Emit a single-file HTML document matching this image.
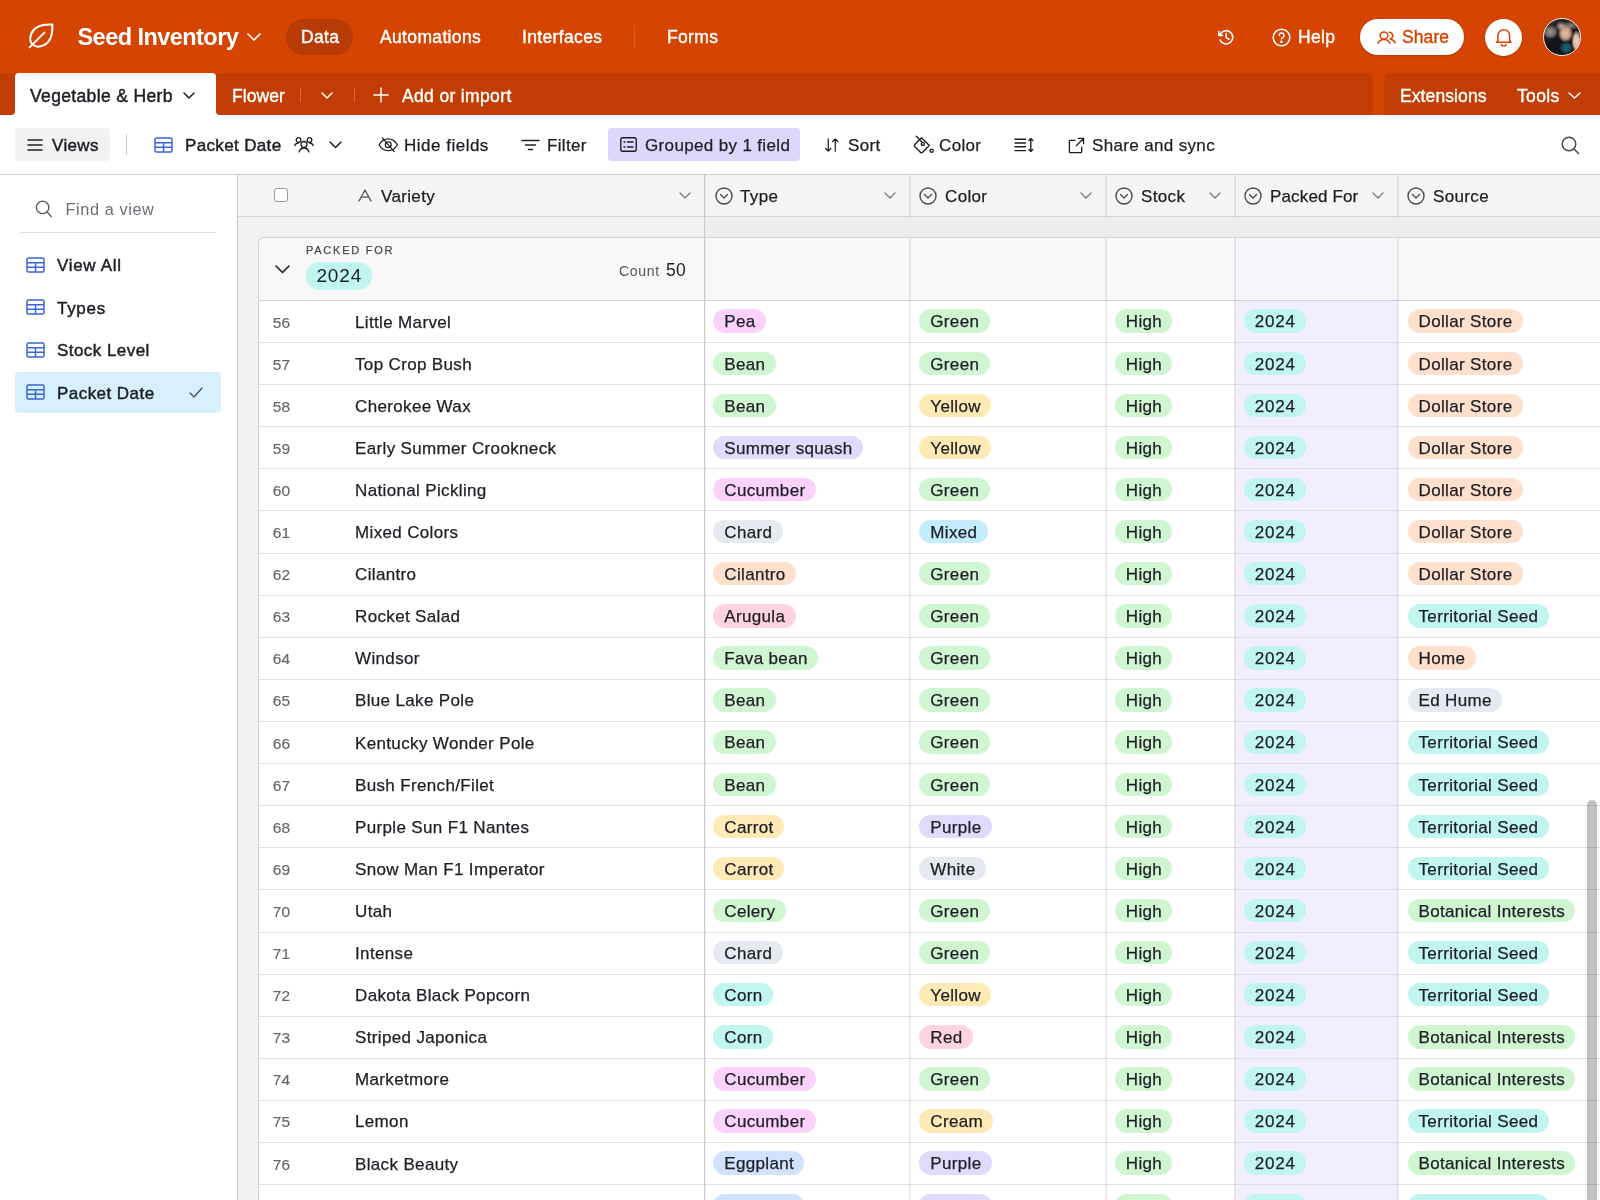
<!DOCTYPE html>
<html lang="en"><head><meta charset="utf-8"><title>Seed Inventory</title>
<style>
*{box-sizing:border-box;margin:0;padding:0}
html,body{width:1600px;height:1200px;overflow:hidden;background:#fff}
body{will-change:transform;font-family:"Liberation Sans",Arial,sans-serif;color:#1d1f25;position:relative;-webkit-font-smoothing:antialiased}
.abs{position:absolute}
svg{position:absolute;overflow:visible}
.t{position:absolute;white-space:nowrap;line-height:1;letter-spacing:.35px}
/* top bar */
#topbar{position:absolute;left:0;top:0;width:1600px;height:115px;background:#d64402}
#topbar .t{color:#fff}
#tabbarL0{position:absolute;left:0;top:73px;width:14.5px;height:42.2px;background:#c13d03;border-bottom-right-radius:4px;border-bottom:1px solid #b93a04}
#tabbarL{position:absolute;left:216px;top:73px;width:1157px;height:42.2px;background:#c13d03;border-top-right-radius:7px;border-bottom-left-radius:4px;border-bottom:1px solid #b93a04}
#tabbarR{position:absolute;left:1384px;top:73px;width:216px;height:42.2px;background:#c13d03;border-top-left-radius:7px;border-bottom:1px solid #b93a04}
#tabActive{position:absolute;left:14.5px;top:73px;width:201.5px;height:43px;background:#fff;border-radius:4px 4px 0 0}
.w{color:#fff}
/* toolbar */
#toolbar{position:absolute;left:0;top:115px;width:1600px;height:59px;background:#fff}
#tbline{position:absolute;left:0;top:174px;width:1600px;height:1px;background:#cdcdcd}
.tb{font-size:17px;color:#1d1f25;-webkit-text-stroke:.25px #1d1f25}
/* sidebar */
#sidebar{position:absolute;left:0;top:175px;width:237px;height:1025px;background:#fff}
#sideline{position:absolute;left:237px;top:175px;width:1px;height:1025px;background:#cbcbcb}
/* grid */
#grid{position:absolute;left:238px;top:175px;width:1362px;height:1025px;background:#f2f2f2}
#ghead{position:absolute;left:238px;top:175px;width:1362px;height:41px;background:#f5f5f5}
#gheadline{position:absolute;left:238px;top:216px;width:1362px;height:1px;background:#d4d4d4}
#strip{z-index:3;position:absolute;left:705px;top:217px;width:895px;height:20px;background:#ededed}
#stripline{z-index:3;position:absolute;left:705px;top:237px;width:895px;height:1px;background:#d4d4d4}
#group{position:absolute;left:258px;top:237px;width:1342px;height:64px;background:#f8f8f8;border:1px solid #d2d2d2;border-right:0;border-top-left-radius:6px}
#rowsleft{position:absolute;left:258px;top:300px;width:1px;height:900px;background:#d2d2d2}
.hd{font-size:17px;color:#1d1f25;-webkit-text-stroke:.25px #1d1f25}
.rows{position:absolute;left:0;top:0}
.row{position:absolute;left:259px;width:1341px;background:#fff;border-bottom:1px solid #e0e0e0;overflow:hidden}
.rc{position:absolute;left:0;width:100%;height:42px}
.row .num{-webkit-text-stroke:.15px #666;position:absolute;left:0;width:45px;top:0;height:42px;line-height:43.5px;text-align:center;font-size:15.5px;color:#666;letter-spacing:.2px}
.row .name{-webkit-text-stroke:.25px #1d1f25;position:absolute;left:96px;top:0;height:42px;line-height:43.5px;font-size:17px;letter-spacing:.35px;color:#1d1f25;white-space:nowrap}
.pill{-webkit-text-stroke:.25px #1d1f25;position:absolute;top:8.9px;height:23.4px;line-height:25.8px;padding:0 10.3px 0 11px;letter-spacing:.35px;border-radius:12px;font-size:17px;color:#1d1f25;white-space:nowrap}
.p-type{left:454.25px}
.p-color{left:660.25px}
.p-stock{left:855.75px}
.p-packed{left:984.75px;letter-spacing:.8px;padding-right:10.2px}
.p-source{left:1148.5px}
.pk{position:absolute;left:976px;top:0;width:163px;height:100%;background:#f1effd}
.green{background:#cff5d1}
.teal{background:#c1f5f0}
.yellow{background:#ffeab6}
.orange{background:#ffe0cc}
.red{background:#ffd4e0}
.pink{background:#fad2fc}
.purple{background:#e0dafd}
.blue{background:#d1e2ff}
.cyan{background:#c4ecff}
.gray{background:#e5e9f0}
.vline{position:absolute;top:175px;width:2px;height:1025px;background:rgba(0,0,0,.07)}

</style></head><body>
<div id="topbar">
  <svg style="left:28px;top:23.400px" width="26" height="26" viewBox="0 0 26 26" fill="none" stroke="#fff" stroke-width="2" stroke-linecap="round" stroke-linejoin="round"><path d="M24.300 1.600C14 1.200 6.200 3.800 3.400 10.500 1.600 15 2.400 19.300 4.600 21.400c2.400 2.300 6.900 3 11.300.800C22.300 19 24.900 11.200 24.300 1.600z"/><path d="M1.600 24.400L16.400 9.600"/></svg>
  <div class="t" style="left:77.500px;top:25.800px;font-size:23.500px;font-weight:700;letter-spacing:-0.55px">Seed Inventory</div>
  <svg style="left:247px;top:33px" width="14" height="8" viewBox="0 0 14 8" fill="none" stroke="#fff" stroke-width="1.6" stroke-linecap="round" stroke-linejoin="round"><path d="M1 1l6 6 6-6"/></svg>
  <div class="abs" style="left:286px;top:19px;width:67px;height:36px;border-radius:18px;background:#b83a05"></div>
  <div class="t" style="left:301px;top:29px;font-size:17.5px;-webkit-text-stroke:.4px #fff">Data</div>
  <div class="t" style="left:380px;top:29px;font-size:17.5px;-webkit-text-stroke:.4px #fff">Automations</div>
  <div class="t" style="left:522px;top:29px;font-size:17.5px;-webkit-text-stroke:.4px #fff">Interfaces</div>
  <div class="abs" style="left:634px;top:25px;width:1px;height:24px;background:#dd602a"></div>
  <div class="t" style="left:667px;top:29px;font-size:17.5px;-webkit-text-stroke:.4px #fff">Forms</div>
  <!-- history -->
  <svg style="left:1217px;top:28.5px" width="17.5" height="16.700" viewBox="0 0 21 20" fill="none" stroke="#fff" stroke-width="2" stroke-linecap="round" stroke-linejoin="round"><path d="M3.4 7.2A8 8 0 1 1 3.6 13.2"/><path d="M2.2 3.2v4.4h4.4"/><path d="M11 5.6v4.6l3.4 2"/></svg>
  <!-- help -->
  <svg style="left:1272px;top:28px" width="19" height="19" viewBox="0 0 19 19" fill="none" stroke="#fff" stroke-width="1.5" stroke-linecap="round" stroke-linejoin="round"><circle cx="9.5" cy="9.5" r="8.3"/><path d="M7.2 7.4a2.4 2.4 0 1 1 3.3 2.2c-.7.3-1 .8-1 1.5"/><circle cx="9.5" cy="13.8" r=".6" fill="#fff"/></svg>
  <div class="t" style="left:1298px;top:29px;font-size:17.5px;-webkit-text-stroke:.4px #fff">Help</div>
  <!-- share -->
  <div class="abs" style="left:1360px;top:19px;width:104px;height:36px;border-radius:18px;background:#fff;box-shadow:0 1px 2px rgba(0,0,0,.2)"></div>
  <svg style="left:1377px;top:29.5px" width="19.500" height="15" viewBox="0 0 21 18" preserveAspectRatio="none" fill="none" stroke="#d54402" stroke-width="1.6" stroke-linecap="round" stroke-linejoin="round"><circle cx="7.5" cy="6.6" r="4.2"/><path d="M1 16c1.2-3 3.6-4.6 6.5-4.600s5.300 1.600 6.500 4.600"/><path d="M12.800 2.600a4.200 4.200 0 0 1 1.200 8.200c2.300.3 4.300 1.900 5.600 4.700"/></svg>
  <div class="t" style="left:1402px;top:29px;font-size:17.5px;color:#d54402;letter-spacing:.1px;-webkit-text-stroke:.4px #d54402">Share</div>
  <!-- bell -->
  <div class="abs" style="left:1485px;top:19px;width:37px;height:37px;border-radius:50%;background:#fff;box-shadow:0 1px 2px rgba(0,0,0,.2)"></div>
  <svg style="left:1494.300px;top:26.800px" width="19.500" height="19.500" viewBox="0 0 20 21" preserveAspectRatio="none" fill="none" stroke="#d54402" stroke-width="1.6" stroke-linecap="round" stroke-linejoin="round"><path d="M4 14.500V9a6 6 0 0 1 12 0v5.500l1.400 2H2.600z"/><path d="M7.600 18.800a2.500 2.500 0 0 0 4.800 0"/></svg>
  <!-- avatar -->
  <div class="abs" style="left:1543px;top:18px;width:37.5px;height:37.5px;border-radius:50%;border:1.500px solid #fdeee6;overflow:hidden;background:
    radial-gradient(ellipse 22% 26% at 60% 40%,#e3c2a8 0,#c9a185 55%,rgba(160,120,95,0) 100%),
    radial-gradient(ellipse 16% 14% at 47% 20%,#c9b79c 0,rgba(150,130,110,0) 100%),
    radial-gradient(ellipse 20% 18% at 62% 80%,#1f6674 0,#174a55 60%,rgba(20,50,60,0) 100%),
    radial-gradient(ellipse 14% 32% at 90% 62%,#ecd2c2 0,#dcb9a6 55%,rgba(200,160,140,0) 100%),
    radial-gradient(ellipse 10% 12% at 93% 45%,#1d3a2a 0,rgba(30,60,40,0) 100%),
    radial-gradient(ellipse 22% 20% at 18% 36%,#a39b95 0,#6d6663 60%,rgba(80,70,70,0) 100%),
    radial-gradient(ellipse 30% 14% at 75% 18%,#8f8378 0,rgba(120,110,100,0) 100%),
    linear-gradient(135deg,#3a3436 0,#15141b 45%,#10151a 100%)"></div>
</div>
<div class="abs" style="left:8px;top:100px;width:216px;height:16px;background:#fff"></div><div id="tabbarL0"></div><div id="tabbarL"></div><div id="tabbarR"></div>
<div id="tabActive"></div>
<div class="t" style="left:30px;top:88px;font-size:17.5px;color:#1d1f25;-webkit-text-stroke:.45px #1d1f25">Vegetable &amp; Herb</div>
<svg style="left:183px;top:92px" width="12" height="7" viewBox="0 0 12 7" fill="none" stroke="#1d1f25" stroke-width="1.5" stroke-linecap="round" stroke-linejoin="round"><path d="M1 1l5 5 5-5"/></svg>
<div class="t w" style="left:232px;top:88px;font-size:17.5px;letter-spacing:.05px;-webkit-text-stroke:.4px #fff">Flower</div>
<div class="abs" style="left:300px;top:88px;width:1px;height:14px;background:#d2693d"></div>
<svg style="left:321px;top:92px" width="12" height="7" viewBox="0 0 12 7" fill="none" stroke="#fff" stroke-width="1.500" stroke-linecap="round" stroke-linejoin="round"><path d="M1 1l5 5 5-5"/></svg>
<div class="abs" style="left:354px;top:88px;width:1px;height:14px;background:#d2693d"></div>
<svg style="left:373px;top:87px" width="16" height="16" viewBox="0 0 16 16" fill="none" stroke="#fff" stroke-width="1.500" stroke-linecap="round"><path d="M8 1v14M1 8h14"/></svg>
<div class="t w" style="left:402px;top:88px;font-size:17.5px;-webkit-text-stroke:.4px #fff">Add or import</div>
<div class="t w" style="left:1400px;top:88px;font-size:17.5px;letter-spacing:.1px;-webkit-text-stroke:.4px #fff">Extensions</div>
<div class="t w" style="left:1517px;top:88px;font-size:17.5px;-webkit-text-stroke:.4px #fff">Tools</div>
<svg style="left:1568px;top:92px" width="13" height="7" viewBox="0 0 13 7" fill="none" stroke="#fff" stroke-width="1.500" stroke-linecap="round" stroke-linejoin="round"><path d="M1 1l5.500 5L12 1"/></svg>

<div id="toolbar"></div><div id="tbline"></div>
<!-- Views btn -->
<div class="abs" style="left:15px;top:128px;width:95px;height:33px;border-radius:4px;background:#f2f2f2"></div>
<svg style="left:27px;top:138px" width="16" height="14" viewBox="0 0 16 14" fill="none" stroke="#1d1f25" stroke-width="1.500" stroke-linecap="round"><path d="M1 2h14M1 7h14M1 12h14"/></svg>
<div class="t tb" style="left:52px;top:137px;-webkit-text-stroke:.45px #1d1f25">Views</div>
<div class="abs" style="left:126px;top:134px;width:1px;height:21px;background:#c9c9c9"></div>
<svg style="left:154px;top:137px" width="19" height="16" viewBox="0 0 19 16" fill="none" stroke="#3b66d6" stroke-width="1.500" stroke-linejoin="round"><rect x="1" y="1" width="17" height="14" rx="1.500"/><path d="M1 5.700h17M1 10.300h17M9.500 5.700V15"/></svg>
<div class="t tb" style="left:185px;top:137px;-webkit-text-stroke:.45px #1d1f25">Packet Date</div>
<svg style="left:294px;top:136px" width="20" height="17" viewBox="0 0 20 17" fill="none" stroke="#1d1f25" stroke-width="1.300" stroke-linecap="round" stroke-linejoin="round"><circle cx="10" cy="8.500" r="3"/><path d="M5 16c.8-2.600 2.700-4 5-4s4.200 1.400 5 4"/><circle cx="4.500" cy="4" r="2.300"/><path d="M.8 9.600C1.500 7.800 2.800 7 4.500 7"/><circle cx="15.500" cy="4" r="2.300"/><path d="M19.200 9.600C18.500 7.800 17.200 7 15.500 7"/></svg>
<svg style="left:329px;top:141px" width="13" height="8" viewBox="0 0 13 8" fill="none" stroke="#1d1f25" stroke-width="1.500" stroke-linecap="round" stroke-linejoin="round"><path d="M1 1l5.500 5.500L12 1"/></svg>
<!-- hide fields -->
<svg style="left:378px;top:137px" width="20.500" height="15.500" viewBox="0 0 22 17" fill="none" stroke="#1d1f25" stroke-width="1.400" stroke-linecap="round" stroke-linejoin="round"><path d="M1 8.500C3.500 4 7 2 11 2s7.500 2 10 6.500C18.500 13 15 15 11 15S3.500 13 1 8.500z"/><circle cx="11" cy="8.500" r="3.200"/><path d="M4.500 1l13 15"/></svg>
<div class="t tb" style="left:404px;top:137px;letter-spacing:.5px">Hide fields</div>
<svg style="left:521px;top:139px" width="19" height="12" viewBox="0 0 19 12" fill="none" stroke="#1d1f25" stroke-width="1.500" stroke-linecap="round"><path d="M1 1.500h17M4.500 6h10M7.500 10.500h4"/></svg>
<div class="t tb" style="left:547px;top:137px">Filter</div>
<div class="abs" style="left:608px;top:128px;width:192px;height:33px;border-radius:4px;background:#ddd7fb"></div>
<svg style="left:620px;top:137px" width="17" height="15" viewBox="0 0 17 15" fill="none" stroke="#1d1f25" stroke-width="1.400" stroke-linecap="round" stroke-linejoin="round"><rect x=".8" y=".8" width="15.400" height="13.400" rx="1.500"/><path d="M4 5h1M7.500 5h5.500M4 10h1M7.500 10h5.500"/></svg>
<div class="t tb" style="left:645px;top:137px">Grouped by 1 field</div>
<svg style="left:823.5px;top:138.200px" width="15.500" height="14" viewBox="0 0 17 16" fill="none" stroke="#1d1f25" stroke-width="1.400" stroke-linecap="round" stroke-linejoin="round"><path d="M4.500 1v14M1.500 12l3 3 3-3M12.500 15V1M9.500 4l3-3 3 3"/></svg>
<div class="t tb" style="left:848px;top:137px">Sort</div>
<svg style="left:912px;top:135px" width="22" height="19" viewBox="0 0 22 19" fill="none" stroke="#1d1f25" stroke-width="1.400" stroke-linecap="round" stroke-linejoin="round"><path d="M9.500 2.700l7.800 7.800-6.700 6.700a1.600 1.600 0 0 1-2.200 0L2.800 11.600a1.600 1.600 0 0 1 0-2.200z"/><path d="M4.300 1.300l5.600 5.600"/><circle cx="10.800" cy="8.900" r="1.500"/><circle cx="19.600" cy="15.700" r="1.600"/></svg>
<div class="t tb" style="left:939px;top:137px">Color</div>
<svg style="left:1014px;top:137px" width="20" height="16" viewBox="0 0 20 16" fill="none" stroke="#1d1f25" stroke-width="1.400" stroke-linecap="round" stroke-linejoin="round"><path d="M1 2.200h10.500M1 6h10.500M1 9.800h10.500M1 13.600h10.500M16.800 1.500v13M14.900 3.400l1.900-1.900 1.900 1.900M14.900 12.600l1.900 1.900 1.900-1.900"/></svg>
<svg style="left:1067.5px;top:136.500px" width="17" height="17" viewBox="0 0 18 18" fill="none" stroke="#1d1f25" stroke-width="1.400" stroke-linecap="round" stroke-linejoin="round"><path d="M7.500 3.500H2.500a1 1 0 0 0-1 1v11a1 1 0 0 0 1 1h11a1 1 0 0 0 1-1v-5"/><path d="M11 1.500h5.500V7M16.500 1.500L9 9"/></svg>
<div class="t tb" style="left:1092px;top:137px">Share and sync</div>
<svg style="left:1561px;top:136px" width="19" height="19" viewBox="0 0 19 19" fill="none" stroke="#444" stroke-width="1.400" stroke-linecap="round"><circle cx="8" cy="8" r="6.800"/><path d="M13 13l4.500 4.500"/></svg>

<div id="sidebar"></div><div id="sideline"></div>
<svg style="left:34.500px;top:199.500px" width="17.500" height="18" viewBox="0 0 18 19" fill="none" stroke="#555" stroke-width="1.400" stroke-linecap="round"><circle cx="7.800" cy="7.800" r="6.600"/><path d="M12.700 12.700l4.300 4.800"/></svg>
<div class="t" style="left:65.5px;top:201.4px;font-size:16.3px;letter-spacing:.6px;color:#6b6e76">Find a view</div>
<div class="abs" style="left:20px;top:232px;width:196px;height:1px;background:#dedede"></div>
<div class="abs" style="left:15px;top:372px;width:206px;height:41px;border-radius:4px;background:#d6f0fd"></div>
<svg style="left:26px;top:257px" width="19" height="16" viewBox="0 0 19 16" fill="none" stroke="#3b66d6" stroke-width="1.500" stroke-linejoin="round"><rect x="1" y="1" width="17" height="14" rx="1.500"/><path d="M1 5.700h17M1 10.300h17M9.500 5.700V15"/></svg>
<svg style="left:26px;top:299px" width="19" height="16" viewBox="0 0 19 16" fill="none" stroke="#3b66d6" stroke-width="1.500" stroke-linejoin="round"><rect x="1" y="1" width="17" height="14" rx="1.500"/><path d="M1 5.700h17M1 10.300h17M9.500 5.700V15"/></svg>
<svg style="left:26px;top:342px" width="19" height="16" viewBox="0 0 19 16" fill="none" stroke="#3b66d6" stroke-width="1.500" stroke-linejoin="round"><rect x="1" y="1" width="17" height="14" rx="1.500"/><path d="M1 5.700h17M1 10.300h17M9.500 5.700V15"/></svg>
<svg style="left:26px;top:384px" width="19" height="16" viewBox="0 0 19 16" fill="none" stroke="#3b66d6" stroke-width="1.500" stroke-linejoin="round"><rect x="1" y="1" width="17" height="14" rx="1.500"/><path d="M1 5.700h17M1 10.300h17M9.500 5.700V15"/></svg>
<div class="t tb" style="left:57px;top:256.5px;letter-spacing:.7px;-webkit-text-stroke:.45px #1d1f25">View All</div>
<div class="t tb" style="left:57px;top:299.5px;letter-spacing:.7px;-webkit-text-stroke:.45px #1d1f25">Types</div>
<div class="t tb" style="left:57px;top:341.5px;letter-spacing:.45px;-webkit-text-stroke:.45px #1d1f25">Stock Level</div>
<div class="t tb" style="left:57px;top:384.5px;letter-spacing:.45px;-webkit-text-stroke:.45px #1d1f25">Packet Date</div>
<svg style="left:189px;top:387px" width="14" height="11" viewBox="0 0 14 11" fill="none" stroke="#555" stroke-width="1.400" stroke-linecap="round" stroke-linejoin="round"><path d="M1 6l4 4 8-9"/></svg>

<div id="grid"></div>
<div id="ghead"></div><div id="gheadline"></div>
<div id="strip"></div><div id="stripline"></div>
<!-- header cells -->
<div class="abs" style="left:274px;top:188px;width:14px;height:14px;border:1.500px solid #9a9a9a;border-radius:3px;background:#fff"></div>
<svg style="left:358px;top:189px" width="14" height="13" viewBox="0 0 14 13" fill="none" stroke="#555" stroke-width="1.300" stroke-linecap="round" stroke-linejoin="round"><path d="M1 12L7 1l6 11M3.200 8.200h7.600"/></svg>
<div class="t hd" style="left:381px;top:188px">Variety</div>
<svg style="left:679px;top:192px" width="12" height="7" viewBox="0 0 12 7" fill="none" stroke="#777" stroke-width="1.300" stroke-linecap="round" stroke-linejoin="round"><path d="M1 1l5 5 5-5"/></svg>

<svg class="ci" style="left:714.7px;top:187px" width="18" height="18" viewBox="0 0 18 18" fill="none" stroke="#4c4c4c" stroke-width="1.400" stroke-linecap="round" stroke-linejoin="round"><circle cx="9" cy="9" r="8"/><path d="M5.500 7.500L9 11l3.500-3.500"/></svg>
<div class="t hd" style="left:740px;top:188px">Type</div>
<svg style="left:884px;top:192px" width="12" height="7" viewBox="0 0 12 7" fill="none" stroke="#777" stroke-width="1.300" stroke-linecap="round" stroke-linejoin="round"><path d="M1 1l5 5 5-5"/></svg>

<svg class="ci" style="left:918.7px;top:187px" width="18" height="18" viewBox="0 0 18 18" fill="none" stroke="#4c4c4c" stroke-width="1.400" stroke-linecap="round" stroke-linejoin="round"><circle cx="9" cy="9" r="8"/><path d="M5.500 7.500L9 11l3.500-3.500"/></svg>
<div class="t hd" style="left:945px;top:188px">Color</div>
<svg style="left:1080px;top:192px" width="12" height="7" viewBox="0 0 12 7" fill="none" stroke="#777" stroke-width="1.300" stroke-linecap="round" stroke-linejoin="round"><path d="M1 1l5 5 5-5"/></svg>

<svg class="ci" style="left:1114.7px;top:187px" width="18" height="18" viewBox="0 0 18 18" fill="none" stroke="#4c4c4c" stroke-width="1.400" stroke-linecap="round" stroke-linejoin="round"><circle cx="9" cy="9" r="8"/><path d="M5.500 7.500L9 11l3.500-3.500"/></svg>
<div class="t hd" style="left:1141px;top:188px">Stock</div>
<svg style="left:1209px;top:192px" width="12" height="7" viewBox="0 0 12 7" fill="none" stroke="#777" stroke-width="1.300" stroke-linecap="round" stroke-linejoin="round"><path d="M1 1l5 5 5-5"/></svg>

<svg class="ci" style="left:1243.7px;top:187px" width="18" height="18" viewBox="0 0 18 18" fill="none" stroke="#4c4c4c" stroke-width="1.400" stroke-linecap="round" stroke-linejoin="round"><circle cx="9" cy="9" r="8"/><path d="M5.500 7.500L9 11l3.500-3.500"/></svg>
<div class="t hd" style="left:1270px;top:188px;letter-spacing:.15px">Packed For</div>
<svg style="left:1372px;top:192px" width="12" height="7" viewBox="0 0 12 7" fill="none" stroke="#777" stroke-width="1.300" stroke-linecap="round" stroke-linejoin="round"><path d="M1 1l5 5 5-5"/></svg>

<svg class="ci" style="left:1406.7px;top:187px" width="18" height="18" viewBox="0 0 18 18" fill="none" stroke="#4c4c4c" stroke-width="1.400" stroke-linecap="round" stroke-linejoin="round"><circle cx="9" cy="9" r="8"/><path d="M5.500 7.500L9 11l3.500-3.500"/></svg>
<div class="t hd" style="left:1433px;top:188px">Source</div>

<!-- group header -->
<div id="group"></div>
<div class="abs" style="left:1235px;top:238px;width:163px;height:62px;background:#f6f5fb"></div>
<svg style="left:275px;top:265px" width="15" height="9" viewBox="0 0 15 9" fill="none" stroke="#1d1f25" stroke-width="1.600" stroke-linecap="round" stroke-linejoin="round"><path d="M1 1l6.500 6.500L14 1"/></svg>
<div class="t" style="left:306px;top:245.2px;font-size:11px;letter-spacing:1.75px;color:#4a4a4a;-webkit-text-stroke:.25px #4a4a4a">PACKED FOR</div>
<div class="abs" style="left:305.5px;top:261.5px;width:66.5px;height:28.5px;border-radius:14.25px;background:#c1f5f0"></div>
<div class="t" style="left:316.4px;top:266px;font-size:19px;letter-spacing:.9px;color:#1d1f25">2024</div>
<div class="t" style="left:619px;top:264px;font-size:14px;letter-spacing:.7px;color:#555">Count</div>
<div class="t" style="left:666px;top:262px;font-size:17.5px;color:#1d1f25">50</div>
<div class="rows">
<div class="row" style="top:301px;height:42px"><i class="pk"></i><div class="rc" style="top:-0.45px"><span class="num">56</span><span class="name">Little Marvel</span><span class="pill p-type pink">Pea</span><span class="pill p-color green">Green</span><span class="pill p-stock green">High</span><span class="pill p-packed teal">2024</span><span class="pill p-source orange">Dollar Store</span></div></div>
<div class="row" style="top:343px;height:42px"><i class="pk"></i><div class="rc" style="top:-0.35px"><span class="num">57</span><span class="name">Top Crop Bush</span><span class="pill p-type green">Bean</span><span class="pill p-color green">Green</span><span class="pill p-stock green">High</span><span class="pill p-packed teal">2024</span><span class="pill p-source orange">Dollar Store</span></div></div>
<div class="row" style="top:385px;height:42px"><i class="pk"></i><div class="rc" style="top:-0.25px"><span class="num">58</span><span class="name">Cherokee Wax</span><span class="pill p-type green">Bean</span><span class="pill p-color yellow">Yellow</span><span class="pill p-stock green">High</span><span class="pill p-packed teal">2024</span><span class="pill p-source orange">Dollar Store</span></div></div>
<div class="row" style="top:427px;height:42px"><i class="pk"></i><div class="rc" style="top:-0.15px"><span class="num">59</span><span class="name">Early Summer Crookneck</span><span class="pill p-type purple">Summer squash</span><span class="pill p-color yellow">Yellow</span><span class="pill p-stock green">High</span><span class="pill p-packed teal">2024</span><span class="pill p-source orange">Dollar Store</span></div></div>
<div class="row" style="top:469px;height:42px"><i class="pk"></i><div class="rc" style="top:-0.05px"><span class="num">60</span><span class="name">National Pickling</span><span class="pill p-type pink">Cucumber</span><span class="pill p-color green">Green</span><span class="pill p-stock green">High</span><span class="pill p-packed teal">2024</span><span class="pill p-source orange">Dollar Store</span></div></div>
<div class="row" style="top:511px;height:43px"><i class="pk"></i><div class="rc" style="top:0.05px"><span class="num">61</span><span class="name">Mixed Colors</span><span class="pill p-type gray">Chard</span><span class="pill p-color cyan">Mixed</span><span class="pill p-stock green">High</span><span class="pill p-packed teal">2024</span><span class="pill p-source orange">Dollar Store</span></div></div>
<div class="row" style="top:554px;height:42px"><i class="pk"></i><div class="rc" style="top:-0.85px"><span class="num">62</span><span class="name">Cilantro</span><span class="pill p-type orange">Cilantro</span><span class="pill p-color green">Green</span><span class="pill p-stock green">High</span><span class="pill p-packed teal">2024</span><span class="pill p-source orange">Dollar Store</span></div></div>
<div class="row" style="top:596px;height:42px"><i class="pk"></i><div class="rc" style="top:-0.75px"><span class="num">63</span><span class="name">Rocket Salad</span><span class="pill p-type red">Arugula</span><span class="pill p-color green">Green</span><span class="pill p-stock green">High</span><span class="pill p-packed teal">2024</span><span class="pill p-source teal">Territorial Seed</span></div></div>
<div class="row" style="top:638px;height:42px"><i class="pk"></i><div class="rc" style="top:-0.65px"><span class="num">64</span><span class="name">Windsor</span><span class="pill p-type green">Fava bean</span><span class="pill p-color green">Green</span><span class="pill p-stock green">High</span><span class="pill p-packed teal">2024</span><span class="pill p-source orange">Home</span></div></div>
<div class="row" style="top:680px;height:42px"><i class="pk"></i><div class="rc" style="top:-0.55px"><span class="num">65</span><span class="name">Blue Lake Pole</span><span class="pill p-type green">Bean</span><span class="pill p-color green">Green</span><span class="pill p-stock green">High</span><span class="pill p-packed teal">2024</span><span class="pill p-source gray">Ed Hume</span></div></div>
<div class="row" style="top:722px;height:42px"><i class="pk"></i><div class="rc" style="top:-0.45px"><span class="num">66</span><span class="name">Kentucky Wonder Pole</span><span class="pill p-type green">Bean</span><span class="pill p-color green">Green</span><span class="pill p-stock green">High</span><span class="pill p-packed teal">2024</span><span class="pill p-source teal">Territorial Seed</span></div></div>
<div class="row" style="top:764px;height:42px"><i class="pk"></i><div class="rc" style="top:-0.35px"><span class="num">67</span><span class="name">Bush French/Filet</span><span class="pill p-type green">Bean</span><span class="pill p-color green">Green</span><span class="pill p-stock green">High</span><span class="pill p-packed teal">2024</span><span class="pill p-source teal">Territorial Seed</span></div></div>
<div class="row" style="top:806px;height:42px"><i class="pk"></i><div class="rc" style="top:-0.25px"><span class="num">68</span><span class="name">Purple Sun F1 Nantes</span><span class="pill p-type yellow">Carrot</span><span class="pill p-color purple">Purple</span><span class="pill p-stock green">High</span><span class="pill p-packed teal">2024</span><span class="pill p-source teal">Territorial Seed</span></div></div>
<div class="row" style="top:848px;height:42px"><i class="pk"></i><div class="rc" style="top:-0.15px"><span class="num">69</span><span class="name">Snow Man F1 Imperator</span><span class="pill p-type yellow">Carrot</span><span class="pill p-color gray">White</span><span class="pill p-stock green">High</span><span class="pill p-packed teal">2024</span><span class="pill p-source teal">Territorial Seed</span></div></div>
<div class="row" style="top:890px;height:43px"><i class="pk"></i><div class="rc" style="top:-0.05px"><span class="num">70</span><span class="name">Utah</span><span class="pill p-type green">Celery</span><span class="pill p-color green">Green</span><span class="pill p-stock green">High</span><span class="pill p-packed teal">2024</span><span class="pill p-source green">Botanical Interests</span></div></div>
<div class="row" style="top:933px;height:42px"><i class="pk"></i><div class="rc" style="top:-0.95px"><span class="num">71</span><span class="name">Intense</span><span class="pill p-type gray">Chard</span><span class="pill p-color green">Green</span><span class="pill p-stock green">High</span><span class="pill p-packed teal">2024</span><span class="pill p-source teal">Territorial Seed</span></div></div>
<div class="row" style="top:975px;height:42px"><i class="pk"></i><div class="rc" style="top:-0.85px"><span class="num">72</span><span class="name">Dakota Black Popcorn</span><span class="pill p-type teal">Corn</span><span class="pill p-color yellow">Yellow</span><span class="pill p-stock green">High</span><span class="pill p-packed teal">2024</span><span class="pill p-source teal">Territorial Seed</span></div></div>
<div class="row" style="top:1017px;height:42px"><i class="pk"></i><div class="rc" style="top:-0.75px"><span class="num">73</span><span class="name">Striped Japonica</span><span class="pill p-type teal">Corn</span><span class="pill p-color red">Red</span><span class="pill p-stock green">High</span><span class="pill p-packed teal">2024</span><span class="pill p-source green">Botanical Interests</span></div></div>
<div class="row" style="top:1059px;height:42px"><i class="pk"></i><div class="rc" style="top:-0.65px"><span class="num">74</span><span class="name">Marketmore</span><span class="pill p-type pink">Cucumber</span><span class="pill p-color green">Green</span><span class="pill p-stock green">High</span><span class="pill p-packed teal">2024</span><span class="pill p-source green">Botanical Interests</span></div></div>
<div class="row" style="top:1101px;height:42px"><i class="pk"></i><div class="rc" style="top:-0.55px"><span class="num">75</span><span class="name">Lemon</span><span class="pill p-type pink">Cucumber</span><span class="pill p-color yellow">Cream</span><span class="pill p-stock green">High</span><span class="pill p-packed teal">2024</span><span class="pill p-source teal">Territorial Seed</span></div></div>
<div class="row" style="top:1143px;height:42px"><i class="pk"></i><div class="rc" style="top:-0.45px"><span class="num">76</span><span class="name">Black Beauty</span><span class="pill p-type blue">Eggplant</span><span class="pill p-color purple">Purple</span><span class="pill p-stock green">High</span><span class="pill p-packed teal">2024</span><span class="pill p-source green">Botanical Interests</span></div></div>
<div class="row" style="top:1185px;height:42px"><i class="pk"></i><div class="rc" style="top:-0.35px"><span class="num">77</span><span class="name">Ping Tung Long</span><span class="pill p-type blue">Eggplant</span><span class="pill p-color purple">Purple</span><span class="pill p-stock green">High</span><span class="pill p-packed teal">2024</span><span class="pill p-source teal">Territorial Seed</span></div></div>
</div>
<div id="rowsleft"></div>
<div class="vline" style="left:704px;background:#c9c9c9;width:1px"></div>
<div class="vline" style="left:705px;background:rgba(0,0,0,.05);width:1px"></div>
<div class="vline" style="left:909px"></div>
<div class="vline" style="left:1105px"></div>
<div class="vline" style="left:1234px"></div>
<div class="vline" style="left:1397px"></div>
<div class="abs" style="left:1587px;top:800px;width:10px;height:410px;border-radius:5px;background:rgba(0,0,0,.24)"></div>
</body></html>
